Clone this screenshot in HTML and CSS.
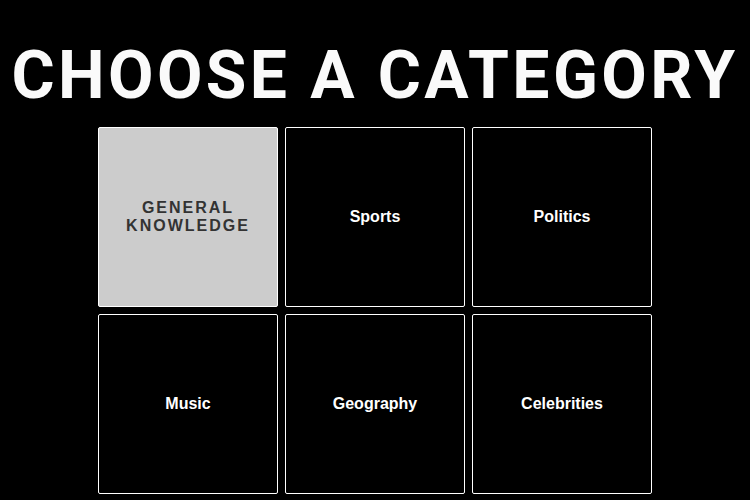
FILE: index.html
```html
<!DOCTYPE html>
<html>
<head>
<meta charset="utf-8">
<link rel="stylesheet" href="styles.css">
</head>
<body>
<h1 class="title">CHOOSE A CATEGORY</h1>
<div class="grid">
  <div class="tile tile-active">GENERAL<br>KNOWLEDGE</div>
  <div class="tile">Sports</div>
  <div class="tile">Politics</div>
  <div class="tile">Music</div>
  <div class="tile">Geography</div>
  <div class="tile">Celebrities</div>
</div>
</body>
</html>
```
FILE: styles.css
```css
html, body {
  margin: 0;
  padding: 0;
  background: #000;
}
body {
  width: 750px;
  height: 500px;
  overflow: hidden;
}
.title {
  margin: 0;
  padding-top: 36px;
  height: 127px;
  box-sizing: border-box;
  font-family: "Roboto", sans-serif;
  font-weight: 700;
  font-size: 66px;
  line-height: 80px;
  letter-spacing: 3.4px;
  color: #fafafa;
  text-align: center;
  white-space: nowrap;
}
.grid {
  display: grid;
  grid-template-columns: repeat(3, 180px);
  grid-auto-rows: 180px;
  gap: 7px;
  justify-content: center;
}
.tile {
  box-sizing: border-box;
  border: 1px solid #fff;
  border-radius: 2px;
  display: flex;
  align-items: center;
  justify-content: center;
  text-align: center;
  font-family: "Liberation Sans", Arial, sans-serif;
  font-weight: 700;
  font-size: 16px;
  color: #fff;
}
.tile-active {
  background: #cccccc;
  color: #333;
  letter-spacing: 2px;
  line-height: 18px;
}
```
